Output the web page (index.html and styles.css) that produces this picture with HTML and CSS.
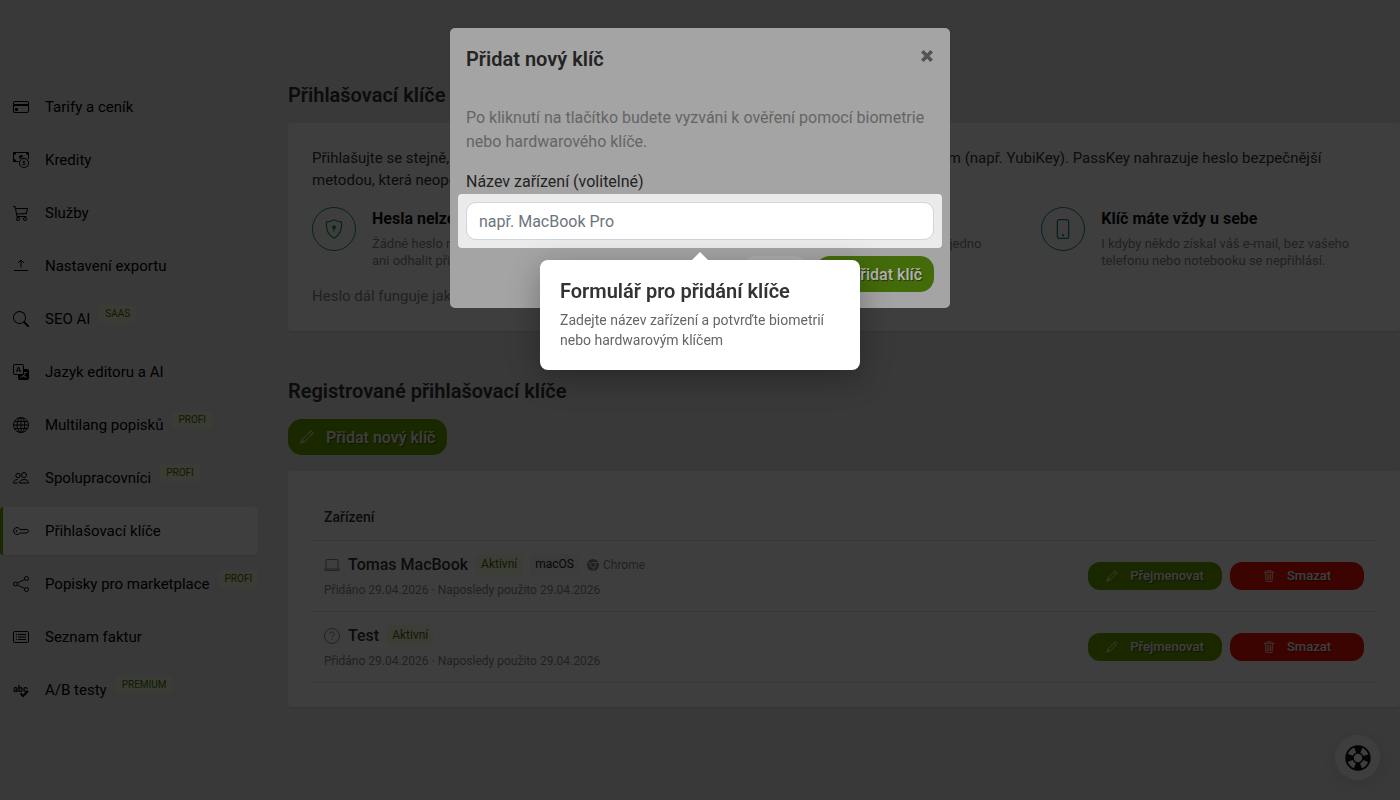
FILE: index.html
```
<!DOCTYPE html>
<html lang="cs">
<head>
  <meta charset="UTF-8" />
  <title>Přihlašovací klíče</title>
  <meta name="viewport" content="width=device-width, initial-scale=1.0" />
  <link rel="stylesheet" href="styles.css">
</head>
<body>
  <!-- shared icons -->
  <svg class="sprite" aria-hidden="true">
    <symbol id="i-pencil" viewBox="0 0 16 16">
      <path fill="none" stroke="currentColor" stroke-linejoin="round" d="M12.500.9l2.600 2.600L5 13.600.9 15.100 2.400 11zM10.400 3l2.600 2.600M2.400 11l2.600 2.600"/>
    </symbol>
    <symbol id="i-trash" viewBox="0 0 16 16">
      <path fill="none" stroke="currentColor" stroke-linecap="round" stroke-linejoin="round" d="M1.500 3h13M5.500 3V1.500a1 1 0 0 1 1-1h3a1 1 0 0 1 1 1V3M3 3l.8 11a1.500 1.500 0 0 0 1.500 1.500h5.400a1.500 1.500 0 0 0 1.500-1.500L13 3M5.500 5.500l.4 7.500M8 5.500V13M10.500 5.500l-.4 7.500"/>
    </symbol>
  </svg>

  <div class="page">
    <nav class="sidebar">
      <a href="#" class="nav-item">
        <svg class="icon" viewBox="0 0 16 16" fill="currentColor"><path d="M0 4a2 2 0 0 1 2-2h12a2 2 0 0 1 2 2v8a2 2 0 0 1-2 2H2a2 2 0 0 1-2-2zm2-1a1 1 0 0 0-1 1v1h14V4a1 1 0 0 0-1-1zm13 4H1v5a1 1 0 0 0 1 1h12a1 1 0 0 0 1-1z"/><path d="M2 10a1 1 0 0 1 1-1h1a1 1 0 0 1 1 1v1a1 1 0 0 1-1 1H3a1 1 0 0 1-1-1z"/></svg>
        <span>Tarify a ceník</span>
      </a>
      <a href="#" class="nav-item">
        <svg class="icon" viewBox="0 0 16 16" fill="currentColor"><path fill-rule="evenodd" d="M11 15a4 4 0 1 0 0-8 4 4 0 0 0 0 8m5-4a5 5 0 1 1-10 0 5 5 0 0 1 10 0"/><path d="M9.438 11.944c.047.596.518 1.060 1.363 1.116v.44h.375v-.443c.875-.061 1.386-.529 1.386-1.207 0-.618-.39-.936-1.090-1.100l-.296-.07v-1.200c.376.043.614.248.671.532h.658c-.047-.575-.54-1.024-1.329-1.073V8.500h-.375v.45c-.747.073-1.255.522-1.255 1.158 0 .562.378.92 1.007 1.066l.248.061v1.272c-.384-.058-.639-.27-.696-.563h-.668zm1.360-1.354c-.369-.085-.569-.26-.569-.522 0-.294.216-.514.572-.578v1.100zm.432.746c.449.104.655.272.655.569 0 .339-.257.571-.709.614v-1.195z"/><path d="M1 0a1 1 0 0 0-1 1v8a1 1 0 0 0 1 1h4.083q.088-.517.258-1H3a2 2 0 0 0-2-2V3a2 2 0 0 0 2-2h10a2 2 0 0 0 2 2v3.528c.38.34.717.728 1 1.154V1a1 1 0 0 0-1-1z"/><path d="M9.998 5.083 10 5a2 2 0 1 0-3.132 1.650 6 6 0 0 1 3.130-1.567"/></svg>
        <span>Kredity</span>
      </a>
      <a href="#" class="nav-item">
        <svg class="icon" viewBox="0 0 16 16" fill="currentColor"><path d="M0 1.500A.5.5 0 0 1 .5 1H2a.5.5 0 0 1 .485.379L2.890 3H14.500a.5.5 0 0 1 .49.598l-1 5a.5.5 0 0 1-.465.401l-9.397.472L4.415 11H13a.5.5 0 0 1 0 1H4a.5.5 0 0 1-.491-.408L2.010 3.607 1.610 2H.5a.5.5 0 0 1-.5-.5M3.102 4l.84 4.479 9.144-.459L13.890 4zM5 12a2 2 0 1 0 0 4 2 2 0 0 0 0-4m7 0a2 2 0 1 0 0 4 2 2 0 0 0 0-4m-7 1a1 1 0 1 1 0 2 1 1 0 0 1 0-2m7 0a1 1 0 1 1 0 2 1 1 0 0 1 0-2"/></svg>
        <span>Služby</span>
      </a>
      <a href="#" class="nav-item">
        <svg class="icon line" viewBox="0 0 16 16"><path d="M1 12.500h14M8 9.500v-7M5 5l3-3 3 3"/></svg>
        <span>Nastavení exportu</span>
      </a>
      <a href="#" class="nav-item">
        <svg class="icon" viewBox="0 0 16 16" fill="currentColor"><path d="M11.742 10.344a6.500 6.500 0 1 0-1.397 1.398h-.001q.044.06.098.115l3.850 3.850a1 1 0 0 0 1.415-1.414l-3.850-3.850a1 1 0 0 0-.115-.1zM12 6.500a5.500 5.500 0 1 1-11 0 5.500 5.500 0 0 1 11 0"/></svg>
        <span>SEO AI</span>
        <span class="tag">SAAS</span>
      </a>
      <a href="#" class="nav-item">
        <svg class="icon" viewBox="0 0 16 16" fill="currentColor"><path d="M4.545 6.714 4.110 8H3l1.862-5h1.284L8 8H6.833l-.435-1.286zm1.634-.736L5.500 3.956h-.049l-.679 2.022z"/><path d="M0 2a2 2 0 0 1 2-2h7a2 2 0 0 1 2 2v3h3a2 2 0 0 1 2 2v7a2 2 0 0 1-2 2H7a2 2 0 0 1-2-2v-3H2a2 2 0 0 1-2-2zm2-1a1 1 0 0 0-1 1v7a1 1 0 0 0 1 1h7a1 1 0 0 0 1-1V2a1 1 0 0 0-1-1zm7.138 9.995q.289.451.63.846c-.748.575-1.673 1.001-2.768 1.292.178.217.451.635.555.867 1.125-.359 2.080-.844 2.886-1.494.777.665 1.739 1.165 2.930 1.472.133-.254.414-.673.629-.89-1.125-.253-2.057-.694-2.820-1.284.681-.747 1.222-1.651 1.621-2.757H14V8h-3v1.047h.765c-.318.844-.74 1.546-1.272 2.130a6 6 0 0 1-.415-.492 2 2 0 0 1-.94.31"/></svg>
        <span>Jazyk editoru a AI</span>
      </a>
      <a href="#" class="nav-item">
        <svg class="icon line" viewBox="0 0 16 16"><circle cx="8" cy="8" r="7.500"/><ellipse cx="8" cy="8" rx="3.800" ry="7.500"/><path d="M8 .5v15M.5 8h15M1.700 4.500h12.600M1.700 11.500h12.600"/></svg>
        <span>Multilang popisků</span>
        <span class="tag">PROFI</span>
      </a>
      <a href="#" class="nav-item">
        <svg class="icon line" viewBox="0 0 16 16"><circle cx="11" cy="5" r="2.500"/><circle cx="5" cy="5.500" r="2.200"/><path d="M6.500 13c0-2 1.700-3.500 4.500-3.500s4.500 1.500 4.500 3.500zM4.500 13h-4c0-2 1-3.400 4.200-3.500"/></svg>
        <span>Spolupracovníci</span>
        <span class="tag">PROFI</span>
      </a>
      <a href="#" class="nav-item active">
        <svg class="icon line" viewBox="0 0 16 16"><path d="M4 4.500a3.500 3.500 0 1 0 3 5.500h7l1.500-1.500v-1L14 6.500H7a3.500 3.500 0 0 0-3-2z"/><circle cx="3.500" cy="8" r=".6"/></svg>
        <span>Přihlašovací klíče</span>
      </a>
      <a href="#" class="nav-item">
        <svg class="icon line" viewBox="0 0 16 16"><circle cx="13.500" cy="2.500" r="2"/><circle cx="13.500" cy="13.500" r="2"/><circle cx="2.500" cy="8" r="2"/><path d="M4.300 7.200l7.400-3.800M4.300 8.800l7.400 3.800"/></svg>
        <span>Popisky pro marketplace</span>
        <span class="tag">PROFI</span>
      </a>
      <a href="#" class="nav-item">
        <svg class="icon line" viewBox="0 0 16 16"><rect x=".5" y="2.500" width="15" height="11" rx="1"/><path d="M5 5.500h8M5 8h8M5 10.500h8M3 5.500h1M3 8h1M3 10.500h1"/></svg>
        <span>Seznam faktur</span>
      </a>
      <a href="#" class="nav-item">
        <svg class="icon line" viewBox="0 0 16 16"><text class="abc" x="0" y="10">abc</text><path class="thick" d="M7.500 11.500l2.500 2.500 5-5"/></svg>
        <span>A/B testy</span>
        <span class="tag">PREMIUM</span>
      </a>
    </nav>

    <main class="content">
      <h2>Přihlašovací klíče</h2>
      <section class="card intro">
        <p class="lead">Přihlašujte se stejně, jako odemykáte svůj telefon – otiskem prstu, obličejem, gestem nebo klíčem (např. YubiKey). PassKey nahrazuje heslo bezpečnější metodou, která neopouští vaše zařízení.</p>
        <div class="features">
          <div class="feature">
            <div class="circle green">
              <svg class="icon line" viewBox="0 0 16 16"><path d="M8 .6c2 1 4 1.600 6 1.900.7 5.500-.8 10-6 12.900C2.800 12.500 1.300 8 2 2.500 4 2.200 6 1.600 8 .6z"/><circle cx="8" cy="6.500" r="1" fill="currentColor"/><path d="M8 7v3"/></svg>
            </div>
            <div>
              <h3>Hesla nelze ukrást</h3>
              <p>Žádné heslo neexistuje, nikdo vám ho nemůže ani odhalit při úniku dat.</p>
            </div>
          </div>
          <div class="feature">
            <div class="circle green"></div>
            <div>
              <h3>Rychlé přihlášení</h3>
              <p>Bez opisování kódů, postačí vám tak jedno klepnutí.</p>
            </div>
          </div>
          <div class="feature">
            <div class="circle blue">
              <svg class="icon line" viewBox="0 0 16 16"><rect x="3.500" y=".5" width="9" height="15" rx="1.500"/><circle cx="8" cy="13" r=".4"/></svg>
            </div>
            <div>
              <h3>Klíč máte vždy u sebe</h3>
              <p>I kdyby někdo získal váš e-mail, bez vašeho telefonu nebo notebooku se nepřihlásí.</p>
            </div>
          </div>
        </div>
        <p class="note">Heslo dál funguje jako záloha.</p>
      </section>

      <h2 class="second">Registrované přihlašovací klíče</h2>
      <button class="btn add-btn"><svg class="icon"><use href="#i-pencil"/></svg>Přidat nový klíč</button>

      <section class="card">
        <table>
          <thead>
            <tr><th>Zařízení</th><th></th></tr>
          </thead>
          <tbody>
            <tr>
              <td>
                <div class="device">
                  <svg class="icon line" viewBox="0 0 16 16"><path d="M2 11.500v-8a1 1 0 0 1 1-1h10a1 1 0 0 1 1 1v8M.5 12h15v.5a1 1 0 0 1-1 1h-13a1 1 0 0 1-1-1z"/></svg>
                  <strong>Tomas MacBook</strong>
                  <span class="badge">Aktivní</span>
                  <span class="badge gray">macOS</span>
                  <span class="browser"><svg class="icon" viewBox="0 0 16 16"><circle cx="8" cy="8" r="8" fill="currentColor"/><g class="cut"><circle cx="8" cy="8" r="3.300"/><path d="M8 4.700h7M5.200 9.700L1.600 3.600M10.800 9.700L7.500 15.500"/></g></svg>Chrome</span>
                </div>
                <small>Přidáno 29.04.2026 · Naposledy použito 29.04.2026</small>
              </td>
              <td>
                <div class="actions">
                  <button class="btn small"><svg class="icon"><use href="#i-pencil"/></svg>Přejmenovat</button>
                  <button class="btn small red"><svg class="icon"><use href="#i-trash"/></svg>Smazat</button>
                </div>
              </td>
            </tr>
            <tr>
              <td>
                <div class="device">
                  <svg class="icon line" viewBox="0 0 16 16"><circle cx="8" cy="8" r="7.500"/><path d="M5.800 6.200C5.800 4.800 6.700 4 8 4s2.200.8 2.200 2C10.200 7.500 8 7.600 8 9.500M8 11v1"/></svg>
                  <strong>Test</strong>
                  <span class="badge">Aktivní</span>
                </div>
                <small>Přidáno 29.04.2026 · Naposledy použito 29.04.2026</small>
              </td>
              <td>
                <div class="actions">
                  <button class="btn small"><svg class="icon"><use href="#i-pencil"/></svg>Přejmenovat</button>
                  <button class="btn small red"><svg class="icon"><use href="#i-trash"/></svg>Smazat</button>
                </div>
              </td>
            </tr>
          </tbody>
        </table>
      </section>
    </main>
  </div>

  <button class="help" aria-label="Nápověda">
    <svg viewBox="0 0 26 26" width="26" height="26" fill="none" stroke="currentColor"><circle cx="13" cy="13" r="11.800" stroke-width="1.800"/><circle cx="13" cy="13" r="8.500" stroke-width="7" stroke-dasharray="6.350 7" stroke-dashoffset="3.175"/><circle cx="13" cy="13" r="5" stroke-width="1.500"/></svg>
  </button>

  <div class="backdrop"></div>

  <div class="modal" role="dialog" aria-labelledby="modal-title">
    <div class="modal-header">
      <h2 id="modal-title">Přidat nový klíč</h2>
      <button class="close" aria-label="Zavřít"><svg viewBox="0 0 12 12" width="14" height="14"><path d="M2 2l8 8M10 2l-8 8" stroke="currentColor" stroke-width="3"/></svg></button>
    </div>
    <div class="modal-body">
      <p>Po kliknutí na tlačítko budete vyzváni k ověření pomocí biometrie nebo hardwarového klíče.</p>
      <label for="device">Název zařízení (volitelné)</label>
      <div class="spotlight">
        <input type="text" id="device" placeholder="např. MacBook Pro" />
        <div class="popover" role="tooltip">
          <h2>Formulář pro přidání klíče</h2>
          <p>Zadejte název zařízení a potvrďte biometrií nebo hardwarovým klíčem</p>
        </div>
      </div>
    </div>
    <div class="modal-footer">
      <button class="btn light">Zrušit</button>
      <button class="btn"><svg class="icon"><use href="#i-pencil"/></svg>Přidat klíč</button>
    </div>
  </div>
</body>
</html>
```

FILE: styles.css
```
* {
  box-sizing: border-box;
}

body {
  margin: 0;
  background: #eaeaea;
  color: #333;
  font-family: Roboto, "Liberation Sans", sans-serif;
  font-size: 16px;
  line-height: 24px;
}

h2, h3, p {
  margin: 0;
}

h2 {
  font-size: 20px;
  font-weight: 600;
  line-height: 24px;
}

button, input {
  font-family: inherit;
}

.sprite {
  display: none;
}

.icon {
  width: 16px;
  height: 16px;
  flex-shrink: 0;
}

.line {
  fill: none;
  stroke: currentColor;
}

.page {
  display: flex;
  gap: 30px;
  padding-top: 83px;
}

/* sidebar */
.sidebar {
  width: 258px;
  flex-shrink: 0;
  display: flex;
  flex-direction: column;
  gap: 5px;
}

.nav-item {
  display: flex;
  align-items: center;
  height: 48px;
  padding-left: 10px;
  border-left: 3px solid transparent;
  border-radius: 4px;
  color: #000;
  font-size: 15px;
  text-decoration: none;
  white-space: nowrap;
}

.nav-item .icon {
  margin-right: 16px;
}

.nav-item.active {
  background: #fff;
  border-left-color: #6ca600;
  box-shadow: 0 1px 2px rgba(0,0,0,0.1);
}

.tag {
  align-self: flex-start;
  margin: 10px 0 0 9px;
  padding: 0 6px;
  border-radius: 4px;
  background: #f2f6dc;
  color: #436f00;
  font-size: 10px;
  line-height: 18px;
}

.abc {
  font-size: 9px;
  font-weight: 700;
  fill: currentColor;
  stroke: none;
}

.thick {
  stroke-width: 2;
}

/* content */
.content {
  flex: 1;
  min-width: 0;
}

.card {
  margin-top: 16px;
  padding: 24px;
  background: #fff;
  border-radius: 4px;
  box-shadow: 0 1px 2px rgba(0,0,0,0.1);
}

.lead {
  font-size: 15px;
  line-height: 22px;
}

.features {
  display: grid;
  grid-template-columns: repeat(3, 1fr);
  gap: 30px;
  margin: 16px 0;
}

.feature {
  display: flex;
  gap: 16px;
}

.feature h3 {
  color: #111;
  font-size: 16px;
  font-weight: 700;
  line-height: 24px;
  margin-bottom: 4px;
}

.feature p {
  color: #888;
  font-size: 13px;
  line-height: 17px;
}

.circle {
  width: 44px;
  height: 44px;
  flex-shrink: 0;
  display: flex;
  align-items: center;
  justify-content: center;
  border: 1px solid;
  border-radius: 50%;
}

.circle .icon {
  width: 20px;
  height: 20px;
}

.green {
  color: #1f9a42;
}

.blue {
  color: #1a7f9c;
}

.note {
  color: #888;
  font-size: 15px;
  line-height: 22px;
}

.second {
  margin-top: 48px;
}

.btn {
  display: inline-flex;
  align-items: center;
  justify-content: center;
  gap: 8px;
  height: 36px;
  padding: 0 12px;
  border: none;
  border-radius: 14px;
  background: #6ca600;
  color: #fff;
  font-size: 16px;
  font-weight: 500;
  text-shadow: 1px 1px 1px rgba(0,0,0,0.5);
  cursor: pointer;
}

.btn .icon {
  width: 14px;
  height: 14px;
}

.add-btn {
  display: flex;
  gap: 12px;
  margin-top: 16px;
}

.small {
  width: 134px;
  height: 28px;
  gap: 12px;
  border-radius: 12px;
  font-size: 13px;
}

.small .icon {
  width: 12px;
  height: 12px;
}

.red {
  background: #f01400;
}

.light {
  background: #fff;
  color: #333;
  text-shadow: none;
}

/* table */
table {
  width: 100%;
  border-collapse: collapse;
}

th, td {
  padding: 12px;
  border-bottom: 1px solid #e6e6e6;
  text-align: left;
}

th {
  height: 45px;
  font-size: 14px;
  font-weight: 500;
  line-height: 20px;
}

td {
  height: 71px;
}

.device {
  display: flex;
  align-items: center;
  gap: 8px;
  color: #888;
}

.device strong {
  color: #333;
  font-weight: 500;
}

.badge {
  padding: 0 5px;
  border-radius: 4px;
  background: #f6fadf;
  color: #436f00;
  font-size: 12px;
  line-height: 21px;
}

.badge.gray {
  background: #f4f4f4;
  color: #222;
}

.browser {
  display: flex;
  align-items: center;
  gap: 4px;
  font-size: 12px;
}

.browser .icon {
  width: 12px;
  height: 12px;
}

.cut {
  fill: none;
  stroke: #fff;
  stroke-width: 1.2;
}

td small {
  display: block;
  margin-top: 4px;
  color: #888;
  font-size: 12px;
  line-height: 18px;
}

.actions {
  display: flex;
  justify-content: flex-end;
  gap: 8px;
}

.help {
  position: fixed;
  right: 20px;
  bottom: 20px;
  display: flex;
  align-items: center;
  justify-content: center;
  width: 45px;
  height: 45px;
  padding: 0;
  border: none;
  border-radius: 50%;
  background: #fff;
  color: #111;
  box-shadow: 0 4px 20px rgba(0,0,0,0.1);
}

/* modal */
.backdrop {
  position: fixed;
  inset: 0;
  background: rgba(0,0,0,0.65);
}

.modal {
  position: fixed;
  top: 28px;
  left: 50%;
  width: 500px;
  max-width: 100%;
  transform: translateX(-50%);
  border-radius: 5px;
  background: #ebebeb;
}

.modal-header {
  display: flex;
  justify-content: space-between;
  padding: 19px 16px 16px;
}

.close {
  display: flex;
  align-items: center;
  height: 18px;
  padding: 0;
  border: none;
  background: none;
  color: #777;
}

.modal-body {
  padding: 19px 16px 0;
}

.modal-body > p {
  color: #919191;
  margin-bottom: 16px;
}

.modal-body label {
  display: block;
  margin-bottom: 8px;
}

/* dims everything outside the highlighted field */
.spotlight {
  position: relative;
  z-index: 1;
}

.spotlight::before {
  content: "";
  position: absolute;
  inset: -8px;
  border-radius: 4px;
  box-shadow: 0 0 0 9999px rgba(0,0,0,0.3);
  pointer-events: none;
}

.spotlight input {
  position: relative;
  display: block;
  width: 100%;
  height: 38px;
  padding: 0 12px;
  border: 1px solid #ced4da;
  border-radius: 10px;
  background: #fff;
  font-size: 16px;
}

.spotlight input::placeholder {
  color: #6c757d;
}

.popover {
  position: absolute;
  top: 58px;
  left: 50%;
  width: 320px;
  transform: translateX(-50%);
  padding: 20px;
  border-radius: 8px;
  background: #fff;
  box-shadow: 0 8px 32px rgba(0,0,0,0.3);
}

.popover::before {
  content: "";
  position: absolute;
  top: -8px;
  left: 50%;
  margin-left: -8px;
  border: 8px solid transparent;
  border-top: none;
  border-bottom-color: #fff;
}

.popover h2 {
  margin-bottom: 8px;
  line-height: 22px;
}

.popover p {
  color: #666;
  font-size: 14px;
  line-height: 20px;
}

.modal-footer {
  display: flex;
  justify-content: flex-end;
  gap: 8px;
  padding: 16px;
}

.modal-footer .btn {
  background: #629a0e;
}

.modal-footer .light {
  background: #f8f8f8;
}
```
